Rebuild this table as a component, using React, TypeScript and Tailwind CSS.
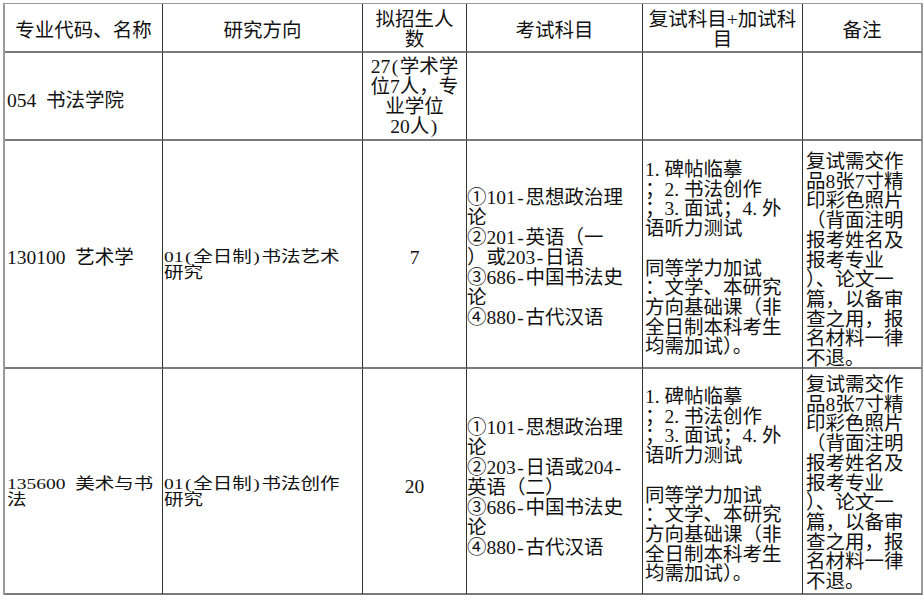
import React from "react";

type CellProps = {
  className?: string;
  children?: React.ReactNode;
  last?: boolean;
};

function Cell({ className = "", children, last }: CellProps) {
  return (
    <div
      className={
        "border-b-2 border-b-[#7a7a7a] " +
        (last ? "border-r-2 border-r-[#9a9a9a] " : "border-r border-r-[#333333] ") +
        "overflow-hidden " +
        className
      }
    >
      {children}
    </div>
  );
}

function fmt(s: string): React.ReactNode[] {
  const out: React.ReactNode[] = [];
  let buf = "";
  let k = 0;
  for (const ch of s) {
    if (ch === "(" || ch === ")" || ch === "-") {
      if (buf) {
        out.push(buf);
        buf = "";
      }
      out.push(
        <span key={k++} className="px-[1.6px]">
          {ch}
        </span>
      );
    } else {
      buf += ch;
    }
  }
  if (buf) out.push(buf);
  return out;
}

function Lines({ lines, className = "" }: { lines: string[]; className?: string }) {
  return (
    <div className={className}>
      {lines.map((l, i) => (
        <div key={i} className="whitespace-nowrap">
          {l === "" ? "\u00a0" : fmt(l)}
        </div>
      ))}
    </div>
  );
}

const col4a = ["①101-思想政治理", "论", "②201-英语（一", "）或203-日语", "③686-中国书法史", "论", "④880-古代汉语"];
const col4b = ["①101-思想政治理", "论", "②203-日语或204-", "英语（二）", "③686-中国书法史", "论", "④880-古代汉语"];
const col5 = ["1. 碑帖临摹", "；2. 书法创作", "；3. 面试；4. 外", "语听力测试", "", "同等学力加试", "：文学、本研究", "方向基础课（非", "全日制本科考生", "均需加试）。"];
const col6 = ["复试需交作", "品8张7寸精", "印彩色照片", "（背面注明", "报考姓名及", "报考专业", "）、论文一", "篇，以备审", "查之用，报", "名材料一律", "不退。"];

export default function App() {
  return (
    <div className="w-[924px] h-[602px] bg-white text-[#111] font-['Liberation_Serif','Noto_Sans_CJK_SC',serif] text-[19.5px]">
      <div className="pt-[3px] pl-[3px]">
        <div className="grid grid-cols-[158px_200px_104px_176px_160px_120px] grid-rows-[49px_88px_228px_226px] w-[920px] border-t border-t-[#9a9a9a] border-l-2 border-l-[#9a9a9a]">
          {/* header */}
          <Cell className="pt-[17px] leading-[20px] text-center">专业代码、名称</Cell>
          <Cell className="pt-[17px] leading-[20px] text-center">研究方向</Cell>
          <Cell className="pt-[6px] leading-[20px] text-center">
            <Lines lines={["拟招生人", "数"]} />
          </Cell>
          <Cell className="pt-[17px] leading-[20px] text-center">考试科目</Cell>
          <Cell className="pt-[6px] leading-[20px] text-center">
            <Lines lines={["复试科目+加试科", "目"]} />
          </Cell>
          <Cell last className="pt-[17px] leading-[20px] text-center">备注</Cell>

          {/* row 1 */}
          <Cell className="pt-[38px] pl-[2px] leading-[20px]">054&nbsp; 书法学院</Cell>
          <Cell />
          <Cell className="pt-[4px] leading-[20px] text-center">
            <Lines lines={["27(学术学", "位7人，专", "业学位", "20人)"]} />
          </Cell>
          <Cell />
          <Cell />
          <Cell last />

          {/* row 2 */}
          <Cell className="pt-[107px] pl-[2px] leading-[20px]">130100&nbsp; 艺术学</Cell>
          <Cell className="pt-[108px] pl-[1px]">
            <Lines className="leading-[20px] origin-top scale-y-[0.8]" lines={["01(全日制)书法艺术", "研究"]} />
          </Cell>
          <Cell className="pt-[107px] leading-[20px] text-center">7</Cell>
          <Cell className="pt-[47px] leading-[20px]">
            <Lines lines={col4a} />
          </Cell>
          <Cell className="pt-[19px] pl-[2px] leading-[19.7px]">
            <Lines lines={col5} />
          </Cell>
          <Cell last className="pt-[11px] pl-[3px] leading-[19.7px]">
            <Lines lines={col6} />
          </Cell>

          {/* row 3 */}
          <Cell className="pt-[107px] pl-[2px]">
            <Lines className="leading-[20px] origin-top scale-y-[0.8]" lines={["135600\u00a0 美术与书", "法"]} />
          </Cell>
          <Cell className="pt-[107px] pl-[1px]">
            <Lines className="leading-[20px] origin-top scale-y-[0.8]" lines={["01(全日制)书法创作", "研究"]} />
          </Cell>
          <Cell className="pt-[108px] leading-[20px] text-center">20</Cell>
          <Cell className="pt-[49px] leading-[20px]">
            <Lines lines={col4b} />
          </Cell>
          <Cell className="pt-[18px] pl-[2px] leading-[19.7px]">
            <Lines lines={col5} />
          </Cell>
          <Cell last className="pt-[6px] pl-[3px] leading-[19.7px]">
            <Lines lines={col6} />
          </Cell>
        </div>
      </div>
    </div>
  );
}
